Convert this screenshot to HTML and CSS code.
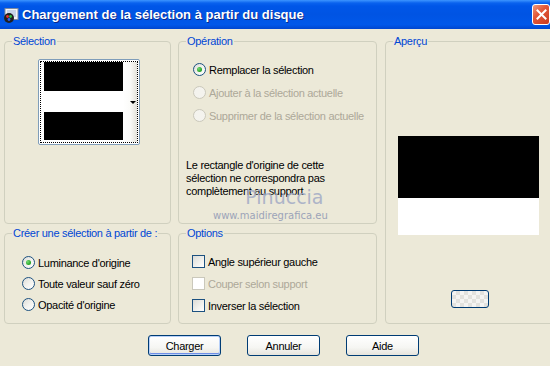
FILE: index.html
```html
<!DOCTYPE html>
<html lang="fr">
<head>
  <meta charset="UTF-8" />
  <title>Chargement de la sélection à partir du disque</title>
  <link rel="stylesheet" href="styles.css">
</head>
<body>
  <div class="window">
    <!-- Title bar -->
    <div class="titlebar">
      <svg class="app-icon" width="16" height="16" viewBox="0 0 16 16">
        <rect x="2" y="0.5" width="13" height="11" fill="#f4f4f4" stroke="#7d8aa0"/>
        <rect x="4" y="2" width="9" height="7" fill="#c8d4e8"/>
        <circle cx="6" cy="10" r="5" fill="#202020"/>
        <circle cx="4.5" cy="8.5" r="1.4" fill="#e83030"/>
        <circle cx="7.5" cy="8.5" r="1.4" fill="#30c040"/>
        <circle cx="6" cy="11.5" r="1.4" fill="#3060f0"/>
      </svg>
      <span class="title">Chargement de la sélection à partir du disque</span>
      <div class="close-btn">
        <svg width="11" height="11" viewBox="0 0 11 11">
          <path d="M1.5 1.5 L9.5 9.5 M9.5 1.5 L1.5 9.5" stroke="#fff" stroke-width="2" stroke-linecap="square"/>
        </svg>
      </div>
    </div>

    <!-- Dialog body -->
    <div class="dialog">
      <div class="groups">
        <fieldset class="group sel-group">
          <legend>Sélection</legend>
          <div class="sel-box">
            <div class="sel-focus">
              <div class="sel-img">
                <div class="band black b1"></div>
                <div class="band white b2"></div>
                <div class="band black b3"></div>
              </div>
              <div class="sel-strip"><span class="arrow"></span></div>
            </div>
          </div>
        </fieldset>

        <fieldset class="group op-group">
          <legend>Opération</legend>
          <div class="opt-list op-list">
            <label class="opt"><span class="radio checked"></span>Remplacer la sélection</label>
            <label class="opt disabled"><span class="radio"></span>Ajouter à la sélection actuelle</label>
            <label class="opt disabled"><span class="radio"></span>Supprimer de la sélection actuelle</label>
          </div>
          <p class="info">Le rectangle d'origine de cette<br>sélection ne correspondra pas<br>complètement au support</p>
          <div class="watermark">
            <span class="wm-name">Pinuccia</span>
            <span class="wm-url">www.maidiregrafica.eu</span>
          </div>
        </fieldset>

        <fieldset class="group preview-group">
          <legend>Aperçu</legend>
          <div class="preview">
            <div class="preview-black"></div>
            <div class="preview-white"></div>
          </div>
          <div class="bg-btn"></div>
        </fieldset>

        <fieldset class="group create-group">
          <legend>Créer une sélection à partir de :</legend>
          <div class="opt-list create-list">
            <label class="opt"><span class="radio checked"></span>Luminance d'origine</label>
            <label class="opt"><span class="radio"></span>Toute valeur sauf zéro</label>
            <label class="opt"><span class="radio"></span>Opacité d'origine</label>
          </div>
        </fieldset>

        <fieldset class="group options-group">
          <legend>Options</legend>
          <div class="opt-list options-list">
            <label class="opt"><span class="check"></span>Angle supérieur gauche</label>
            <label class="opt disabled"><span class="check"></span>Couper selon support</label>
            <label class="opt"><span class="check"></span>Inverser la sélection</label>
          </div>
        </fieldset>
      </div>

      <div class="buttons">
        <button class="btn default">Charger</button>
        <button class="btn">Annuler</button>
        <button class="btn">Aide</button>
      </div>
    </div>
  </div>
</body>
</html>
```

FILE: styles.css
```css
body {
  margin: 0;
  width: 550px;
  height: 366px;
  overflow: hidden;
  background: #ece9d8;
  font-family: Tahoma, 'Liberation Sans', Arial, sans-serif;
  font-size: 11px;
  letter-spacing: -0.3px;
  color: #000;
}

.window {
  display: flex;
  flex-direction: column;
  height: 100%;
}

/* Title bar */
.titlebar {
  height: 29px;
  flex: none;
  display: flex;
  align-items: center;
  background: linear-gradient(#3d95ff 0, #0a62ee 3px, #0056e8 6px, #0054e3 50%, #0058ea 85%, #0046cf 100%);
  position: relative;
}

.app-icon {
  margin-left: 3px;
  margin-top: 2px;
}

.title {
  margin-left: 3px;
  color: #fff;
  font-family: 'Liberation Sans', Arial, sans-serif;
  font-weight: bold;
  font-size: 13px;
  letter-spacing: 0;
  text-shadow: 1px 1px #0c2a8a;
}

.close-btn {
  position: absolute;
  left: 532px;
  top: 4px;
  width: 18px;
  height: 21px;
  box-sizing: border-box;
  border: 1px solid #fff;
  border-radius: 3px;
  background: linear-gradient(135deg, #f09a7c 0, #e2583a 40%, #cc3a1e 100%);
  display: flex;
  align-items: center;
  justify-content: center;
}

/* Dialog */
.dialog {
  flex: 1;
  padding: 6px 0 0 4px;
}

.groups {
  display: grid;
  grid-template-columns: 167px 199px 175px;
  grid-template-rows: 189px 97px;
  column-gap: 7px;
  row-gap: 3px;
}

.group {
  margin: 0;
  padding: 0;
  min-width: 0;
  border: 1px solid #d0d0bf;
  border-radius: 4px;
  position: relative;
}

.group legend {
  margin-left: 7px;
  padding: 0 1px;
  line-height: 13px;
  color: #0046d5;
}

.preview-group {
  grid-column: 3;
  grid-row: 1 / 3;
  margin-left: 1px;
}

/* Selection thumbnail dropdown */
.sel-box {
  width: 98px;
  height: 82px;
  margin: 11px 0 0 33px;
  padding: 1px;
  border: 1px solid #7f9db9;
  border-radius: 2px;
  background: #fff;
}

.sel-focus {
  height: 80px;
  border: 1px dotted #000;
  display: flex;
}

.sel-img {
  width: 79px;
  margin-left: 3px;
  display: flex;
  flex-direction: column;
}

.band.black { background: #000; }
.band.white { background: #fff; }
.b1 { height: 29px; }
.b2 { height: 21px; }
.b3 { height: 28px; }

.sel-strip {
  flex: 1;
  background: linear-gradient(90deg, #fff 0, #fbfbf9 50%, #e4e2da 100%);
  display: flex;
  align-items: center;
  justify-content: flex-end;
  padding-right: 1px;
}

.arrow {
  width: 0;
  height: 0;
  border-left: 3px solid transparent;
  border-right: 3px solid transparent;
  border-top: 3px solid #000;
}

/* Radio and check lists */
.opt-list {
  display: flex;
  flex-direction: column;
}

.opt {
  display: flex;
  align-items: center;
  height: 13px;
  white-space: nowrap;
}

.opt.disabled {
  color: #aca899;
}

.radio {
  width: 11px;
  height: 11px;
  flex: none;
  border: 1px solid #1c5180;
  border-radius: 50%;
  background: linear-gradient(135deg, #dcdcd7 0, #f2f2ee 50%, #fff 100%);
  margin-right: 3px;
  display: flex;
  align-items: center;
  justify-content: center;
}

.radio.checked::after {
  content: '';
  width: 5px;
  height: 5px;
  border-radius: 50%;
  background: radial-gradient(circle at 35% 35%, #74da74 0, #21a121 70%);
}

.opt.disabled .radio {
  border-color: #cac8bb;
  background: #f4f3ee;
}

.check {
  width: 11px;
  height: 11px;
  flex: none;
  border: 1px solid #1c5180;
  background: linear-gradient(135deg, #dcdcd7 0, #f0f0ec 55%, #fff 100%);
  margin-right: 3px;
}

.opt.disabled .check {
  border-color: #cac8bb;
  background: #fff;
}

.op-list {
  padding: 15px 0 0 14px;
  gap: 10px;
}

.create-list {
  padding: 16px 0 0 17px;
  gap: 8px;
}

.options-list {
  padding: 15px 0 0 13px;
  gap: 9px;
}

.info {
  margin: 37px 0 0 7px;
  line-height: 13px;
}

.watermark {
  position: absolute;
  left: 34px;
  top: 139px;
  display: flex;
  flex-direction: column;
  align-items: center;
  color: #8f98b4;
  opacity: 0.85;
  letter-spacing: 0;
  pointer-events: none;
}

.wm-name {
  font-family: 'DejaVu Sans', sans-serif;
  font-size: 19px;
  line-height: 20px;
  margin-left: 28px;
  color: #a3abc6;
}

.wm-url {
  font-family: Verdana, 'DejaVu Sans', sans-serif;
  font-size: 10px;
  line-height: 12px;
  margin-top: 3px;
}

/* Preview */
.preview {
  width: 141px;
  margin: 88px 0 0 12px;
}

.preview-black {
  height: 62px;
  background: #000;
}

.preview-white {
  height: 37px;
  background: #fff;
}

.bg-btn {
  width: 36px;
  height: 16px;
  margin: 55px 0 0 65px;
  border: 1px solid #003c74;
  border-radius: 3px;
  background-color: #f4f4f2;
  background-image:
    linear-gradient(45deg, #e2e2de 25%, transparent 25%, transparent 75%, #e2e2de 75%),
    linear-gradient(45deg, #e2e2de 25%, transparent 25%, transparent 75%, #e2e2de 75%);
  background-size: 8px 8px;
  background-position: 0 0, 4px 4px;
}

/* Bottom buttons */
.buttons {
  display: flex;
  gap: 26px;
  margin-top: 11px;
  padding-left: 144px;
}

.btn {
  width: 73px;
  height: 21px;
  padding: 0;
  border: 1px solid #003c74;
  border-radius: 3px;
  background: linear-gradient(#ffffff 0, #f6f6f3 60%, #e6e4dc 100%);
  font-family: Tahoma, 'Liberation Sans', Arial, sans-serif;
  font-size: 11px;
  letter-spacing: -0.3px;
  color: #000;
}

.btn.default {
  box-shadow: inset 0 0 0 1px #b8d0f8, inset 0 -1px 0 1px #6f8fe8;
}
```
